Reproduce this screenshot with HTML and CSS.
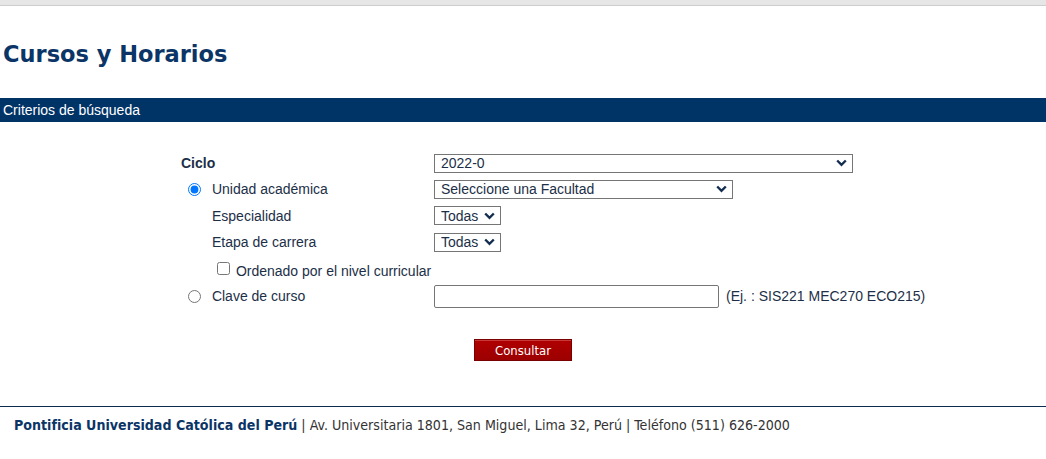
FILE: index.html
```html
<!DOCTYPE html>
<html lang="es">
<head>
    <meta charset="UTF-8">
    <title>Cursos y Horarios</title>
    <link rel="stylesheet" href="styles.css">
</head>
<body>
    <div class="topbar"></div>

    <h1 class="titulo">Cursos y Horarios</h1>

    <div class="barra">Criterios de búsqueda</div>

    <form class="criterios">
        <div class="fila">
            <div class="etiqueta negrita">Ciclo</div>
            <select class="combo ancho-1">
                <option>2022-0</option>
            </select>
        </div>
        <div class="fila">
            <label class="etiqueta con-radio"><input type="radio" name="tipo" checked> Unidad académica</label>
            <select class="combo ancho-2">
                <option>Seleccione una Facultad</option>
            </select>
        </div>
        <div class="fila fila-alta">
            <div class="etiqueta sangria">Especialidad</div>
            <select class="combo corto">
                <option>Todas</option>
            </select>
        </div>
        <div class="fila">
            <div class="etiqueta sangria">Etapa de carrera</div>
            <select class="combo corto">
                <option>Todas</option>
            </select>
        </div>
        <div class="fila fila-check">
            <label class="etiqueta con-check"><input type="checkbox"> Ordenado por el nivel curricular</label>
        </div>
        <div class="fila">
            <label class="etiqueta con-radio"><input type="radio" name="tipo"> Clave de curso</label>
            <input type="text" class="caja">
            <span class="ejemplo">(Ej. : SIS221 MEC270 ECO215)</span>
        </div>

        <div class="acciones">
            <button type="button" class="boton">Consultar</button>
        </div>
    </form>

    <div class="pie">
        <b>Pontificia Universidad Católica del Perú</b> | Av. Universitaria 1801, San Miguel, Lima 32, Perú | Teléfono (511) 626-2000
    </div>
</body>
</html>
```

FILE: styles.css
```css
body {
    margin: 0;
    font-family: "Liberation Sans", Arial, sans-serif;
    font-size: 14px;
    color: #1c2f47;
    background-color: #fff;
}
.topbar {
    height: 5px;
    background-color: #e6e6e6;
    border-bottom: 1px solid #cdcdcd;
}
.titulo {
    margin: 35px 0 0 3px;
    height: 57px;
    font-family: "DejaVu Sans", Verdana, sans-serif;
    font-size: 22.5px;
    line-height: 26px;
    color: #0b3566;
}
.barra {
    height: 24px;
    line-height: 24px;
    padding-left: 3px;
    background-color: #003366;
    color: #fff;
}
.criterios {
    margin: 28px 0 0 181px;
}
.fila {
    display: flex;
    align-items: center;
    height: 26px;
}
.fila-alta {
    height: 27px;
}
.fila-check {
    height: 28px;
    padding-top: 2px;
    box-sizing: border-box;
}
.etiqueta {
    width: 253px;
    flex: none;
}
.negrita {
    font-weight: bold;
}
.sangria {
    padding-left: 31px;
    box-sizing: border-box;
}
.con-radio input {
    margin: 0 7px 0 7px;
    width: 13px;
    height: 13px;
    vertical-align: -2px;
}
.con-check {
    padding-left: 36px;
    box-sizing: border-box;
}
.con-check input {
    margin: 0 2px 0 0;
    width: 13px;
    height: 13px;
    vertical-align: 1px;
}
.combo {
    appearance: none;
    height: 19px;
    padding: 0 0 0 6px;
    border: 1px solid #767676;
    border-radius: 0;
    font-family: "Liberation Sans", Arial, sans-serif;
    font-size: 14px;
    color: #1c2f47;
    background: #fff url("data:image/svg+xml,%3Csvg xmlns='http://www.w3.org/2000/svg' width='11' height='8' viewBox='0 0 11 8'%3E%3Cpath d='M1.2 1.5 5.5 5.8 9.8 1.5' fill='none' stroke='%23122d4f' stroke-width='2.4'/%3E%3C/svg%3E") no-repeat right 5px center;
}
.ancho-1 {
    width: 419px;
}
.ancho-2 {
    width: 299px;
}
.corto {
    width: 67px;
}
.caja {
    width: 285px;
    height: 23px;
    box-sizing: border-box;
    border: 1px solid #767676;
    border-radius: 2px;
    margin: 0;
}
.ejemplo {
    margin-left: 7px;
}
.acciones {
    margin: 30px 0 0 -181px;
    text-align: center;
}
.boton {
    width: 98px;
    height: 22px;
    padding: 0;
    border: 1px solid #7a0000;
    border-radius: 0;
    background: linear-gradient(#b00000, #9c0000);
    box-shadow: inset 0 1px 0 #c83a3a;
    color: #fff;
    font-family: "DejaVu Sans Condensed", "Liberation Sans Narrow", Tahoma, sans-serif;
    font-stretch: condensed;
    font-size: 13px;
    cursor: pointer;
}
.pie {
    margin-top: 45px;
    border-top: 1px solid #0d2b4f;
    padding: 10px 0 0 14px;
    font-family: "DejaVu Sans Condensed", "DejaVu Sans", Tahoma, sans-serif;
    font-stretch: condensed;
    font-size: 14.1px;
    color: #333;
}
.pie b {
    color: #0b3566;
}
```
